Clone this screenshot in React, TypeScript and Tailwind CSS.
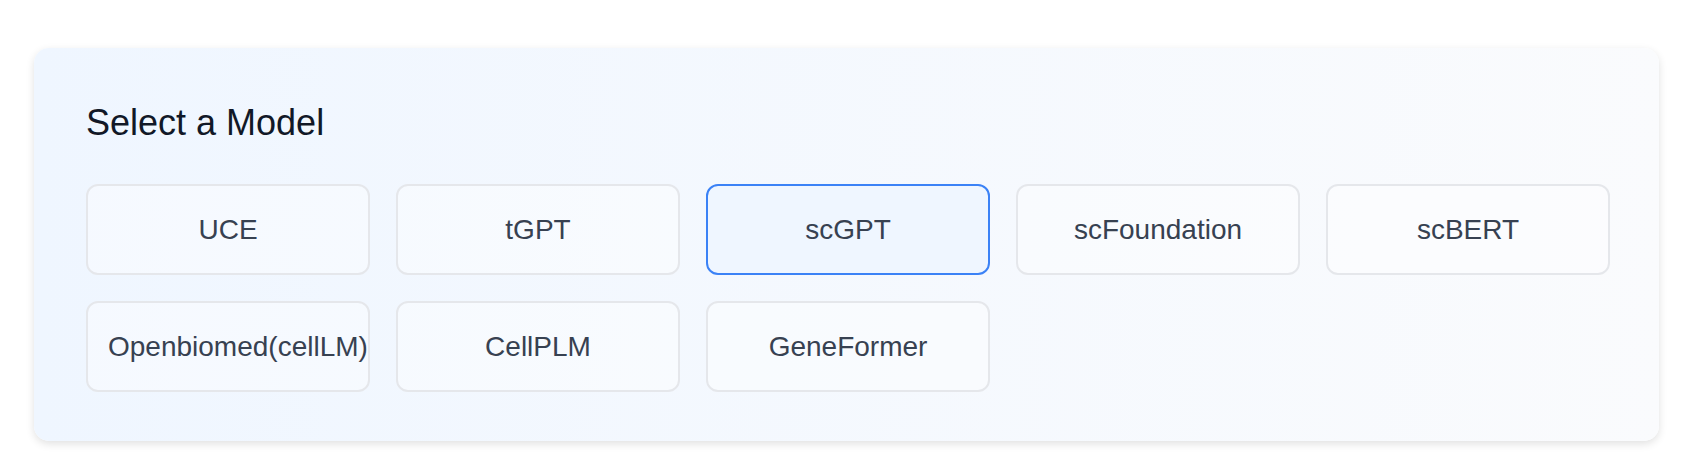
import React from 'react';

const models = ['UCE', 'tGPT', 'scGPT', 'scFoundation', 'scBERT', 'Openbiomed(cellLM)', 'CellPLM', 'GeneFormer'];

export default function App() {
    const [selected, setSelected] = React.useState('scGPT');

    return (
        <div className="min-h-screen bg-white pt-[48px] pl-[34px]" style={{ fontFamily: '"Liberation Sans", Arial, Helvetica, sans-serif' }}>
            <div className="w-[1625px] rounded-[15px] bg-linear-to-r from-[#eff6ff] to-[#fafbfd] shadow-[0_3px_8px_rgba(0,0,0,0.12)] pl-[52px] pr-[49px] pt-[55px] pb-[49px]">
                <h2 className="text-[36px] leading-[40px] text-[#111827] mb-[41px]">Select a Model</h2>
                <div className="grid grid-cols-5 gap-x-[26px] gap-y-[26px]">
                    {models.map(m => (
                        <button key={m} type="button" onClick={() => setSelected(m)}
                            className={`h-[91px] min-w-0 px-[20px] rounded-[12px] border-2 text-[28px] whitespace-nowrap text-[#374151] flex items-center justify-center-safe transition-colors ${selected === m ? 'border-[#3b82f6] bg-[#eff6ff]' : 'border-[#e5e7eb] bg-white/40 hover:border-blue-300'}`}>
                            {m}
                        </button>
                    ))}
                </div>
            </div>
        </div>
    );
}
